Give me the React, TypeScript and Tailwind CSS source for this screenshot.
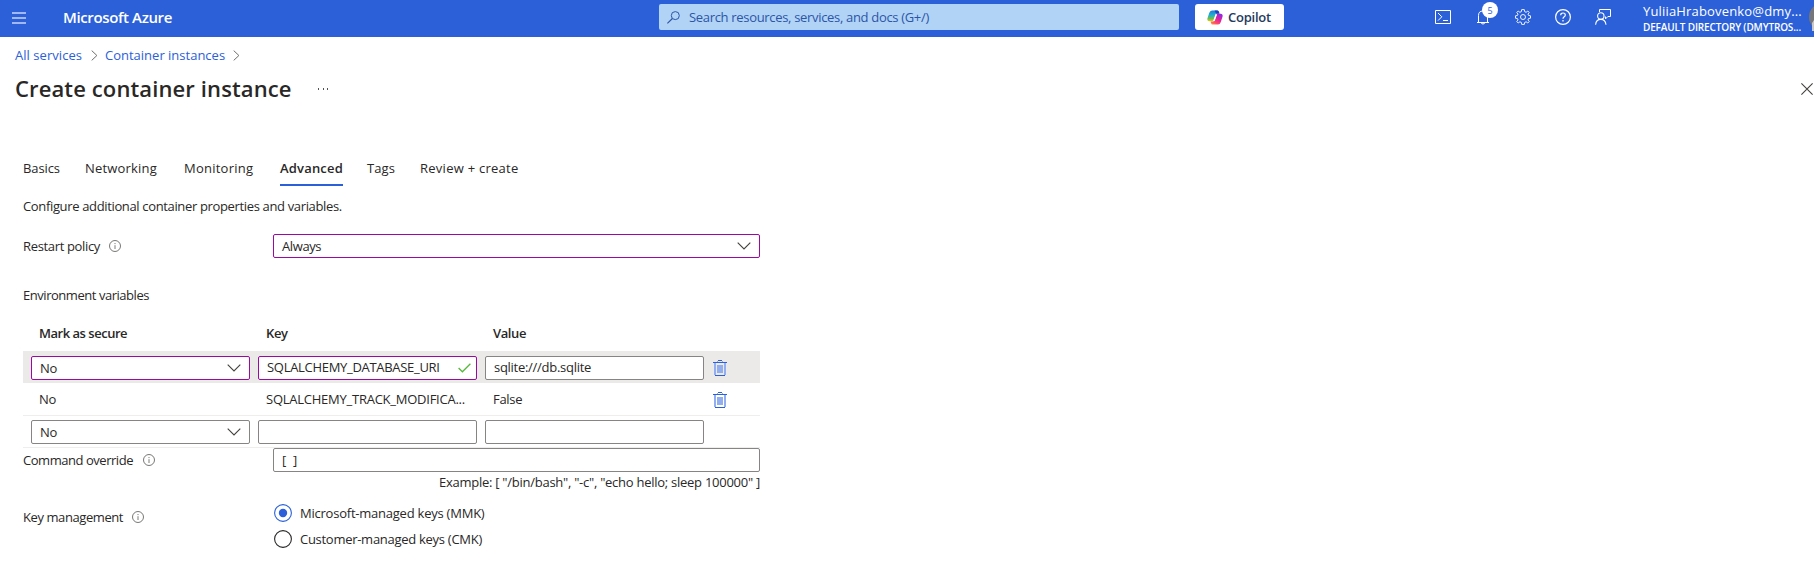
import type { ReactNode } from 'react';

function Info() {
  return (
    <svg width="12" height="12" viewBox="0 0 12 12" fill="none" className="shrink-0">
      <circle cx="6" cy="6" r="5.5" stroke="#6a6967" strokeWidth="0.9" />
      <path d="M6 5.2V9M6 3v1.1" stroke="#7d7c7a" strokeWidth="1" />
    </svg>
  );
}

function ChevronDown() {
  return (
    <svg width="14" height="8" viewBox="0 0 14 8" fill="none" className="shrink-0">
      <path d="M0.7 0.7L7 7L13.3 0.7" stroke="#44423f" strokeWidth="1.1" />
    </svg>
  );
}

function ChevronRight() {
  return (
    <svg width="7" height="11" viewBox="0 0 7 11" fill="none" className="mt-px shrink-0">
      <path d="M0.7 0.6L5.9 5.5L0.7 10.4" stroke="#6f6e6c" strokeWidth="1" />
    </svg>
  );
}

function Trash() {
  return (
    <svg width="14" height="16" viewBox="0 0 14 16" fill="none" className="shrink-0" shapeRendering="crispEdges">
      <rect x="0" y="2" width="14" height="1" fill="#2b60d9" />
      <rect x="4" y="1" width="1" height="1" fill="#93aeee" />
      <rect x="9" y="1" width="1" height="1" fill="#93aeee" />
      <rect x="5" y="0" width="4" height="1" fill="#2b60d9" />
      <rect x="1" y="3" width="2" height="12" fill="#93aeee" />
      <rect x="11" y="3" width="2" height="12" fill="#93aeee" />
      <rect x="4" y="5" width="6" height="8" fill="#93aeee" />
      <rect x="2" y="15" width="10" height="1" fill="#2b60d9" />
    </svg>
  );
}

function Select({ value, touched = false, wide = false }: { value: string; touched?: boolean; wide?: boolean }) {
  return (
    <div
      className={`flex h-6 items-center justify-between rounded-[2px] border bg-white pr-[8px] pl-2 ${
        touched ? 'border-[#9a0a9f]' : 'border-[#868583]'
      } ${wide ? 'w-[487px]' : 'w-[219px]'}`}
    >
      <span className="tracking-[-0.4px]">{value}</span>
      <ChevronDown />
    </div>
  );
}

function Input({ children, touched = false }: { children?: ReactNode; touched?: boolean }) {
  return (
    <div
      className={`flex h-6 w-[219px] items-center justify-between rounded-[2px] border bg-white pr-[5px] pb-0.5 pl-2 ${
        touched ? 'border-[#9a0a9f]' : 'border-[#868583]'
      }`}
    >
      {children}
    </div>
  );
}

function TopBar() {
  return (
    <header className="flex h-[37px] items-start overflow-hidden bg-[#2b60d9] text-white">
      <div className="mt-3 ml-3 flex w-[14px] flex-col gap-[3px]">
        <div className="h-[2px] bg-[#a0b8ef]" />
        <div className="h-[2px] bg-[#a0b8ef]" />
        <div className="h-[2px] bg-[#a0b8ef]" />
      </div>
      <div className="mt-[7px] ml-[37px] w-[596px] text-[15px] leading-[21px] font-semibold tracking-[-0.37px]">
        Microsoft Azure
      </div>
      <div className="mt-1 flex h-[26px] w-[520px] items-center rounded-[2px] bg-[#b1d3f5] pl-2 text-[#2c55a8]">
        <svg width="13" height="13" viewBox="0 0 13 13" fill="none">
          <circle cx="8.3" cy="4.6" r="4" stroke="#2c55a8" strokeWidth="1" />
          <path d="M5.4 7.5L0.4 12.4" stroke="#2c55a8" strokeWidth="1.1" />
        </svg>
        <span className="ml-[9px] tracking-[-0.32px]">Search resources, services, and docs (G+/)</span>
      </div>
      <div className="mt-1 ml-4 flex h-[26px] w-[89px] items-center rounded-[3px] bg-white pl-3 text-[#243a5e]">
        <svg width="16" height="15" viewBox="0 0 16 15" fill="none">
          <defs>
            <linearGradient id="cool" x1="0" y1="0" x2="0" y2="1">
              <stop offset="0" stopColor="#1b7fd8" />
              <stop offset="0.45" stopColor="#22b0d0" />
              <stop offset="0.75" stopColor="#6cc04a" />
              <stop offset="1" stopColor="#f3c50e" />
            </linearGradient>
            <linearGradient id="warm" x1="0.8" y1="0" x2="0.2" y2="1">
              <stop offset="0" stopColor="#8b2be2" />
              <stop offset="0.45" stopColor="#e0219b" />
              <stop offset="0.8" stopColor="#ff4f64" />
              <stop offset="1" stopColor="#ff8a3c" />
            </linearGradient>
          </defs>
          <path d="M5 0.5H10.4Q11.6 0.5 12 2L12.4 3.6H9.8Q8.6 3.6 8.2 5L6.4 10.6Q6 11.3 5 11.3H2.3Q-0.2 11.3 0.5 8.3L2.2 3Q3 0.5 5 0.5Z" fill="url(#cool)" />
          <path d="M7.6 0.5H10.4Q11.6 0.5 12 2L12.4 3.8H9.2Z" fill="#1f3fc0" />
          <path d="M11 14.5H5.6Q4.4 14.5 4 13L3.6 11.4H6.2Q7.4 11.4 7.8 10L9.6 4.4Q10 3.7 11 3.7H13.7Q16.2 3.7 15.5 6.7L13.8 12Q13 14.5 11 14.5Z" fill="url(#warm)" />
          <path d="M9.4 4.6L7 11" stroke="#fff" strokeWidth="1.2" />
        </svg>
        <span className="ml-[5px] font-semibold tracking-[-0.23px]">Copilot</span>
      </div>

      <div className="mt-[9px] ml-[151px] flex h-4 w-[208px] gap-6">
        <svg width="16" height="16" viewBox="0 0 16 16" fill="none" stroke="#fff">
          <path d="M0.5 1.5H15.5V14.5H0.5Z" />
          <path d="M3 4L6.8 7.8L3 11.6M8 11.5H13" />
        </svg>
        <div className="relative h-4 w-4">
          <svg width="16" height="16" viewBox="0 0 16 16" fill="none" stroke="#fff">
            <path d="M3.5 13V6.5Q3.5 2 8 2Q12.5 2 12.5 6.5V13M2 13.5H14M6.3 13.5Q6.3 15 8 15Q9.7 15 9.7 13.5" />
          </svg>
          <span className="absolute -top-[7px] left-[7px] flex h-4 w-4 items-center justify-center rounded-full bg-white text-[9px] leading-none text-[#2b60d9]">
            5
          </span>
        </div>
        <svg width="16" height="16" viewBox="0 0 16 16" fill="none" stroke="#fff">
          <path d="M6.7 0.6H9.3L9.7 2.7L11.1 3.3L12.8 2L14.2 3.5L13 5.1L13.5 6.4L15.5 6.8V9.2L13.5 9.6L13 10.9L14.2 12.6L12.8 14L11.1 12.8L9.7 13.4L9.3 15.4H6.7L6.3 13.4L4.9 12.8L3.2 14L1.8 12.6L3 10.9L2.5 9.6L0.5 9.2V6.8L2.5 6.4L3 5.1L1.8 3.5L3.2 2L4.9 3.3L6.3 2.7Z" strokeWidth="0.9" />
          <circle cx="8" cy="8" r="2.5" strokeWidth="0.9" />
        </svg>
        <svg width="16" height="16" viewBox="0 0 16 16" fill="none" stroke="#fff">
          <circle cx="8" cy="8" r="7.4" strokeWidth="1.2" />
          <path d="M5.7 6.2Q5.7 4 8 4Q10.3 4 10.3 6Q10.3 7 9.2 7.8Q8 8.6 8 9.8" strokeWidth="1.2" />
          <path d="M8 11V12.4" strokeWidth="1.3" />
        </svg>
        <svg width="16" height="16" viewBox="0 0 16 16" fill="none" stroke="#fff">
          <circle cx="5.8" cy="7" r="3.2" strokeWidth="1.1" />
          <path d="M0.6 15.8Q1 10.4 5.8 10.4Q10.4 10.4 11 15.8" strokeWidth="1.1" />
          <path d="M4.5 3V0.5H15.5V7.5H12.9L10.5 9.9V7.5" />
        </svg>
      </div>

      <div className="w-[166px] whitespace-nowrap">
        <div className="mt-[2px] text-[13px] leading-[18px] tracking-[0.17px]">YuliiaHrabovenko@dmy...</div>
        <div className="text-[10px] leading-[14px] font-semibold tracking-[-0.15px]">DEFAULT DIRECTORY (DMYTROS...</div>
      </div>
      <svg width="5" height="28" viewBox="0 0 5 28" className="mt-[3px] shrink-0">
        <circle cx="14" cy="14" r="14" fill="#74767c" />
        <path d="M3 28V20L5 17V28Z" fill="#c9c6c4" />
      </svg>
    </header>
  );
}

function Cell({ className, children }: { className: string; children: ReactNode }) {
  return <div className={`shrink-0 whitespace-nowrap ${className}`}>{children}</div>;
}

export default function App() {
  return (
    <div className="h-[580px] w-full overflow-hidden bg-white font-['Open_Sans','Noto_Sans',sans-serif] text-[13px] leading-5 text-[#292827]">
      <TopBar />

      <nav className="mt-2 flex h-5 items-center pl-[15px] text-[#2b60d9]">
        <span className="w-[76px] tracking-[0.05px]">All services</span>
        <ChevronRight />
        <span className="ml-[7px] w-[128px]">Container instances</span>
        <ChevronRight />
      </nav>

      <div className="mt-[6px] flex h-8 items-center pl-[15px]">
        <h1 className="mt-[2px] w-[302px] text-[22px] leading-8 font-semibold tracking-[0.12px]">Create container instance</h1>
        <svg width="12" height="2" viewBox="0 0 12 2" className="mt-[3px]" shapeRendering="crispEdges">
          <path d="M1 0h1v2h-1zM6 0h1v2h-1zM10 0h1v2h-1z" fill="#55534f" />
        </svg>
        <svg width="12" height="12" viewBox="0 0 12 12" className="mt-[4px] mr-px ml-auto">
          <path d="M0.4 0.4L11.6 11.6M11.6 0.4L0.4 11.6" stroke="#44423f" strokeWidth="1.1" />
        </svg>
      </div>

      <main className="mt-[53px] ml-[23px] w-[737px]">
        <div className="flex h-[30px] leading-6">
          <div className="w-[62px] tracking-[-0.1px]">Basics</div>
          <div className="w-[99px] tracking-[0.18px]">Networking</div>
          <div className="w-[96px] tracking-[0.24px]">Monitoring</div>
          <div className="mr-6 w-[63px] border-b-2 border-[#2b60d9] font-semibold tracking-[0.18px]">Advanced</div>
          <div className="w-[53px] tracking-[0.1px]">Tags</div>
          <div className="tracking-[0.26px]">Review + create</div>
        </div>

        <p className="mt-[10px] tracking-[-0.35px]">Configure additional container properties and variables.</p>

        <div className="mt-[18px] flex items-center">
          <div className="flex w-[250px] items-center">
            <span className="w-[86px] tracking-[-0.34px]">Restart policy</span>
            <Info />
          </div>
          <Select value="Always" touched wide />
        </div>

        <h2 className="mt-[27px] tracking-[-0.46px]">Environment variables</h2>

        <div className="mt-[18px] flex pl-4 font-semibold">
          <Cell className="w-[227px] tracking-[-0.48px]">Mark as secure</Cell>
          <Cell className="w-[227px] tracking-[-0.4px]">Key</Cell>
          <Cell className="tracking-[-0.4px]">Value</Cell>
        </div>

        <div className="mt-2 flex h-8 gap-2 bg-[#ebeae9] pt-[5px] pl-2">
          <Select value="No" touched />
          <Input touched>
            <span className="tracking-[-0.3px]">SQLALCHEMY_DATABASE_URI</span>
            <svg width="13" height="10" viewBox="0 0 13 10" fill="none" className="mt-[2px]">
              <path d="M0.6 5L4.4 8.8L12.4 0.8" stroke="#57b83f" strokeWidth="1.3" />
            </svg>
          </Input>
          <Input>
            <span className="tracking-[-0.28px]">sqlite:///db.sqlite</span>
          </Input>
          <div className="mt-[4px] ml-px">
            <Trash />
          </div>
        </div>
        <div className="flex h-[33px] items-center border-b border-[#efeeed] pl-4">
          <Cell className="w-[227px] tracking-[-0.4px]">No</Cell>
          <Cell className="w-[227px] tracking-[-0.245px]">SQLALCHEMY_TRACK_MODIFICA...</Cell>
          <Cell className="w-[220px] tracking-[-0.3px]">False</Cell>
          <div className="mt-[2px]">
            <Trash />
          </div>
        </div>
        <div className="flex h-8 gap-2 border-b border-[#efeeed] pt-1 pl-2">
          <Select value="No" />
          <Input />
          <Input />
        </div>

        <div className="flex">
          <div className="flex h-6 w-[250px] items-center">
            <span className="w-[120px] tracking-[-0.46px]">Command override</span>
            <Info />
          </div>
          <div className="h-6 w-[487px] rounded-[2px] border border-[#868583] pl-2 leading-[22px] whitespace-pre">[  ]</div>
        </div>
        <div className="text-right tracking-[-0.26px]">Example: [ "/bin/bash", "-c", "echo hello; sleep 100000" ]</div>

        <div className="mt-[11px] flex">
          <div className="mt-[2px] flex h-6 w-[251px] items-center">
            <span className="w-[109px] tracking-[-0.42px]">Key management</span>
            <Info />
          </div>
          <div className="flex flex-col gap-[6px]">
            <div className="flex h-5 items-center gap-2">
              <svg width="18" height="18" viewBox="0 0 18 18" fill="none">
                <circle cx="9" cy="9" r="8.4" stroke="#2b60d9" strokeWidth="1.1" />
                <circle cx="9" cy="9" r="4.2" fill="#2b60d9" />
              </svg>
              <span className="tracking-[-0.23px]">Microsoft-managed keys (MMK)</span>
            </div>
            <div className="flex h-5 items-center gap-2">
              <svg width="18" height="18" viewBox="0 0 18 18" fill="none">
                <circle cx="9" cy="9" r="8.4" stroke="#292827" strokeWidth="1.1" />
              </svg>
              <span className="tracking-[-0.28px]">Customer-managed keys (CMK)</span>
            </div>
          </div>
        </div>
      </main>
    </div>
  );
}
